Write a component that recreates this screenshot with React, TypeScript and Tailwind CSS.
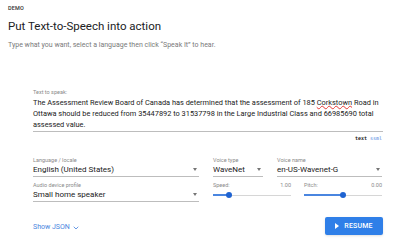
import { ChevronDown } from 'lucide-react';

const Caret = () => (
  <span className="mr-[2px] h-0 w-0 border-x-[2.5px] border-t-[3px] border-x-transparent border-t-[#757575]" />
);

interface SelectProps {
  label: string;
  value: string;
  className?: string;
}

const Select = ({ label, value, className = '' }: SelectProps) => (
  <div className={className}>
    <div className="text-[5.5px] leading-[7px] text-[#8a8a8a]">{label}</div>
    <div className="flex items-center justify-between border-b border-[#bdbdbd] pb-[1px] text-[8px] leading-[11px] text-[#212121]">
      <span>{value}</span>
      <Caret />
    </div>
  </div>
);

interface SliderProps {
  label: string;
  value: string;
  percent: number;
}

const Slider = ({ label, value, percent }: SliderProps) => (
  <div className="w-[78px]">
    <div className="flex justify-between text-[5.5px] leading-[7px] text-[#8a8a8a]">
      <span>{label}</span>
      <span>{value}</span>
    </div>
    <div className="relative mt-[2px] h-[8px]">
      <div className="absolute left-0 right-0 top-[3.5px] h-[1px] bg-[#d6d6d6]" />
      <div
        className="absolute left-0 top-[3px] h-[2px] bg-[#4a86e0]"
        style={{ width: `${percent}%` }}
      />
      <div
        className="absolute top-[1px] h-[6px] w-[6px] -translate-x-1/2 rounded-full bg-[#1f63d1]"
        style={{ left: `${percent}%` }}
      />
    </div>
  </div>
);

const App = () => {
  return (
    <div className="h-[246px] w-[399px] overflow-hidden bg-white px-[8px] pt-[5px] font-['Roboto',sans-serif]">
      <div className="text-[5.5px] font-medium leading-[6px] tracking-wide text-[#333]">DEMO</div>
      <h1 className="mt-[8px] text-[11.5px] leading-[14px] text-[#202124]">
        Put Text-to-Speech into action
      </h1>
      <p className="mt-[8px] text-[7px] leading-[9px] text-[#7a7a7a]">
        Type what you want, select a language then click “Speak It” to hear.
      </p>

      <div className="ml-[25px] mt-[39px] w-[350px]">
        <div className="text-[5.5px] leading-[7px] text-[#8a8a8a]">Text to speak:</div>
        <div className="mt-[1px] border-b border-[#bdbdbd] pb-[1px] text-[7.4px] leading-[11px] text-[#212121]">
          The Assessment Review Board of Canada has determined that the assessment of 185{' '}
          <span className="underline decoration-[#e53935] decoration-wavy decoration-1 underline-offset-0">
            Corkstown
          </span>{' '}
          Road in Ottawa should be reduced from 35447892 to 31537798 in the Large Industrial Class and
          66985690 total assessed value.
        </div>
        <div className="mt-[3px] flex justify-end gap-[3px] pr-[1px] font-['DejaVu_Sans_Mono',monospace] text-[5px] leading-[7px]">
          <span className="font-bold text-[#222]">text</span>
          <span className="text-[#4a86e0]">ssml</span>
        </div>

        <div className="mt-[15px] flex gap-[14px]">
          <Select label="Language / locale" value="English (United States)" className="w-[166px]" />
          <Select label="Voice type" value="WaveNet" className="w-[50px]" />
          <Select label="Voice name" value="en-US-Wavenet-G" className="w-[105px]" />
        </div>

        <div className="mt-[5px] flex gap-[14px]">
          <Select label="Audio device profile" value="Small home speaker" className="w-[166px]" />
          <div className="flex gap-[13px]">
            <Slider label="Speed:" value="1.00" percent={20} />
            <Slider label="Pitch:" value="0.00" percent={50} />
          </div>
        </div>

        <div className="mt-[15px] flex items-start justify-between">
          <button className="mt-[6px] flex items-center gap-[2px] text-[7px] leading-[9px] text-[#4a86e0]">
            Show JSON
            <ChevronDown className="h-[8px] w-[8px]" strokeWidth={2.5} />
          </button>
          <button className="flex h-[18px] w-[58px] items-center justify-center gap-[5px] rounded-[2px] bg-[#2f7fe8] text-[7px] font-medium tracking-wide text-white shadow-sm">
            <span className="h-0 w-0 border-y-[3px] border-l-[4.5px] border-y-transparent border-l-white" />
            RESUME
          </button>
        </div>
      </div>
    </div>
  );
};

export default App;
